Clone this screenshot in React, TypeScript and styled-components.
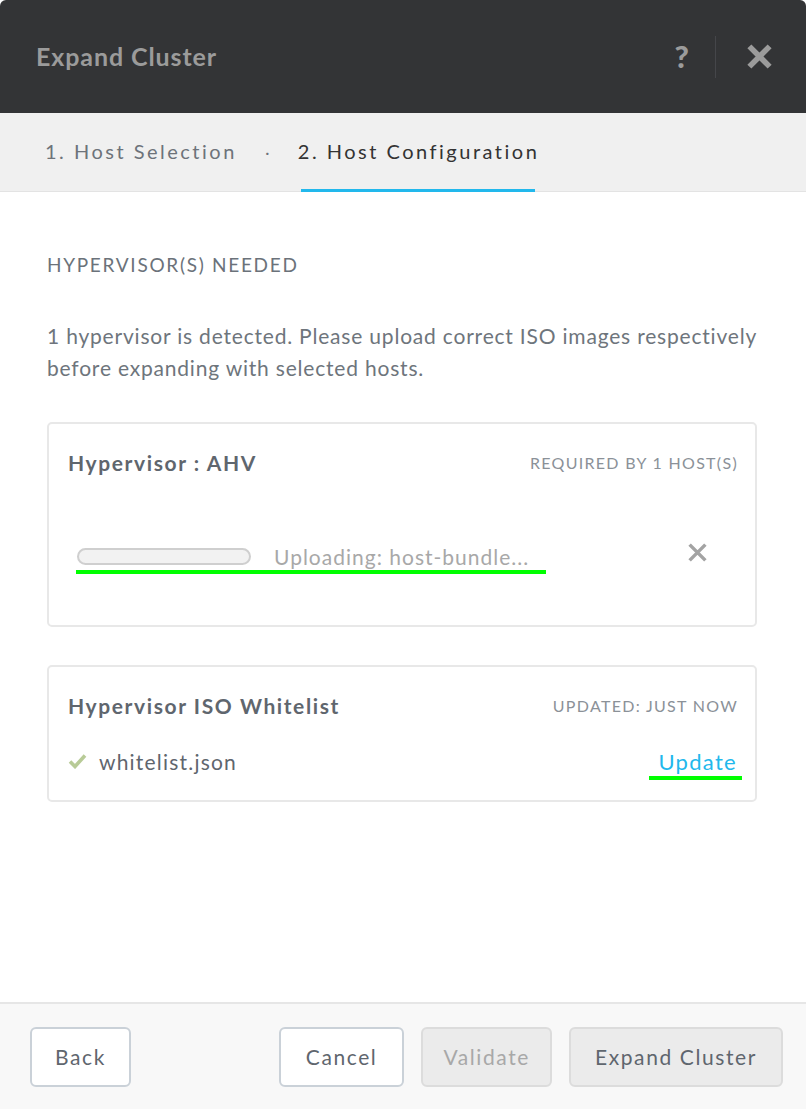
import React from "react";
import styled, { createGlobalStyle } from "styled-components";

const Global = createGlobalStyle`
  html, body { margin: 0; padding: 0; background: #ffffff; }
  body { font-family: Lato, "Open Sans", sans-serif; }
  * { box-sizing: border-box; }
`;

const Dialog = styled.div`
  width: 806px;
  height: 1109px;
  display: flex;
  flex-direction: column;
  background: #ffffff;
  border-radius: 6px 6px 0 0;
  overflow: hidden;
`;

const Header = styled.header`
  height: 113px;
  flex: none;
  background: #333436;
  display: flex;
  align-items: center;
  padding: 0 33px 0 36px;
`;

const Title = styled.h1`
  margin: 0;
  flex: 1;
  font-size: 25px;
  font-weight: 700;
  color: #9b9b9b;
  letter-spacing: 0.9px;
  margin-top: -2px;
`;

const HeaderActions = styled.div`
  display: flex;
  align-items: center;
  height: 42px;
`;

const HelpMark = styled.span`
  font-size: 31px;
  font-weight: 900;
  color: #9b9b9b;
  line-height: 1;
  padding-right: 26px;
`;

const Divider = styled.div`
  width: 1px;
  height: 42px;
  background: #45464a;
  margin-right: 30px;
`;

const Tabs = styled.nav`
  height: 79px;
  flex: none;
  background: #f0f0f0;
  border-bottom: 1px solid #e3e3e3;
  display: flex;
  align-items: stretch;
  padding-left: 45px;
`;

const Tab = styled.div<{ $active?: boolean }>`
  display: flex;
  align-items: center;
  font-size: 20px;
  letter-spacing: 2.5px;
  padding-bottom: 2px;
  color: ${(p) => (p.$active ? "#333333" : "#6d737a")};
  position: relative;
  &::after {
    content: "";
    display: ${(p) => (p.$active ? "block" : "none")};
    position: absolute;
    left: 3px;
    right: 4px;
    bottom: -1px;
    height: 3px;
    background: #22b8ec;
  }
`;

const TabDot = styled.div`
  display: flex;
  align-items: center;
  width: 61px;
  justify-content: center;
  color: #6d737a;
  font-size: 16px;
  padding-bottom: 2px;
`;

const Content = styled.main`
  flex: 1;
  padding: 61px 49px 0 47px;
  display: flex;
  flex-direction: column;
`;

const SectionHeading = styled.h2`
  margin: 0;
  font-size: 19px;
  line-height: 24px;
  font-weight: 400;
  letter-spacing: 1.7px;
  color: #6b727a;
`;

const Paragraph = styled.p`
  margin: 43px 0 38px;
  font-size: 21px;
  line-height: 32px;
  letter-spacing: 0.8px;
  color: #6e757c;
`;

const Card = styled.section<{ $height: number }>`
  height: ${(p) => p.$height}px;
  border: 2px solid #e8e8e8;
  border-radius: 5px;
  padding: 0 18px 0 19px;
  display: flex;
  flex-direction: column;
  margin-bottom: 38px;
`;

const CardHead = styled.div`
  display: flex;
  justify-content: space-between;
  align-items: center;
  height: 42px;
  margin-top: 17px;
`;

const CardTitle = styled.h3`
  margin: 0;
  font-size: 21px;
  font-weight: 700;
  letter-spacing: 1.6px;
  color: #5f666e;
`;

const CardMeta = styled.span`
  font-size: 16px;
  letter-spacing: 1.3px;
  margin-right: -1px;
  color: #8b9198;
  text-transform: uppercase;
`;

const UploadRow = styled.div`
  margin-top: 58px;
  display: flex;
  align-items: center;
  position: relative;
  height: 30px;
  padding-left: 9px;
`;

const Progress = styled.div`
  width: 174px;
  height: 17px;
  border-radius: 9px;
  border: 2px solid #cfcfcf;
  background: #f2f2f2;
  flex: none;
`;

const UploadText = styled.span`
  margin-left: 23px;
  font-size: 21px;
  letter-spacing: 1px;
  color: #a8a8a8;
  flex: 1;
`;

const Highlight = styled.div<{ $left: number; $width: number; $top: number }>`
  position: absolute;
  left: ${(p) => p.$left}px;
  top: ${(p) => p.$top}px;
  width: ${(p) => p.$width}px;
  height: 4px;
  background: #00ff00;
`;

const RemoveBtn = styled.button`
  border: 0;
  background: transparent;
  padding: 0;
  margin-right: 29px;
  margin-top: -8px;
  display: flex;
  cursor: pointer;
`;

const FileRow = styled.div`
  margin-top: 18px;
  display: flex;
  align-items: center;
  height: 34px;
  position: relative;
`;

const FileName = styled.span`
  margin-left: 12px;
  font-size: 21px;
  letter-spacing: 1.2px;
  color: #5f666e;
  flex: 1;
`;

const LinkBtn = styled.a`
  font-size: 22px;
  letter-spacing: 1.3px;
  color: #22b8ec;
  text-decoration: none;
  cursor: pointer;
`;

const Footer = styled.footer`
  height: 107px;
  flex: none;
  background: #f8f8f8;
  border-top: 2px solid #e6e6e6;
  display: flex;
  align-items: center;
  padding: 0 23px 0 30px;
  gap: 17px;
`;

const Spacer = styled.div`
  flex: 1;
`;

const Button = styled.button<{ $variant?: "default" | "disabled" | "muted"; $pad?: number }>`
  height: 60px;
  padding: 0 ${(p) => p.$pad ?? 23}px;
  border-radius: 6px;
  border: 2px solid #cad1d8;
  background: ${(p) => (p.$variant === "disabled" || p.$variant === "muted" ? "#ebebeb" : "#ffffff")};
  color: ${(p) => (p.$variant === "disabled" ? "#a8a8a8" : "#5f666e")};
  border-color: ${(p) => (p.$variant === "disabled" || p.$variant === "muted" ? "#dcdcdc" : "#cad1d8")};
  font-family: Lato, "Open Sans", sans-serif;
  font-size: 21px;
  letter-spacing: 1.6px;
  cursor: pointer;
`;

const Cross = ({ size, stroke, color }: { size: number; stroke: number; color: string }) => (
  <svg width={size} height={size} viewBox="0 0 24 24">
    <path d="M3 3 L21 21 M21 3 L3 21" stroke={color} strokeWidth={stroke} strokeLinecap="butt" />
  </svg>
);

const Check = () => (
  <svg width="19" height="16" viewBox="0 0 19 16">
    <path d="M2 8.5 L7 13.5 L17 2.5" stroke="#b8cb97" strokeWidth="3.6" fill="none" />
  </svg>
);

export default function App() {
  return (
    <>
      <Global />
      <Dialog>
        <Header>
          <Title>Expand Cluster</Title>
          <HeaderActions>
            <HelpMark>?</HelpMark>
            <Divider />
            <Cross size={27} stroke={5} color="#9b9b9b" />
          </HeaderActions>
        </Header>
        <Tabs>
          <Tab>1. Host Selection</Tab>
          <TabDot>·</TabDot>
          <Tab $active>2. Host Configuration</Tab>
        </Tabs>
        <Content>
          <SectionHeading>HYPERVISOR(S) NEEDED</SectionHeading>
          <Paragraph>
            1 hypervisor is detected. Please upload correct ISO images respectively before expanding with selected hosts.
          </Paragraph>
          <Card $height={205}>
            <CardHead>
              <CardTitle>Hypervisor : AHV</CardTitle>
              <CardMeta>Required by 1 host(s)</CardMeta>
            </CardHead>
            <UploadRow>
              <Progress />
              <UploadText>Uploading: host-bundle...</UploadText>
              <RemoveBtn aria-label="Remove">
                <Cross size={21} stroke={4} color="#a3a3a3" />
              </RemoveBtn>
              <Highlight $left={8} $top={29} $width={470} />
            </UploadRow>
          </Card>
          <Card $height={137}>
            <CardHead>
              <CardTitle>Hypervisor ISO Whitelist</CardTitle>
              <CardMeta>Updated: just now</CardMeta>
            </CardHead>
            <FileRow>
              <Check />
              <FileName>whitelist.json</FileName>
              <LinkBtn>Update</LinkBtn>
              <Highlight $left={581} $top={32} $width={93} />
            </FileRow>
          </Card>
        </Content>
        <Footer>
          <Button>Back</Button>
          <Spacer />
          <Button $pad={25}>Cancel</Button>
          <Button $variant="disabled" $pad={20}>Validate</Button>
          <Button $variant="muted" $pad={24}>Expand Cluster</Button>
        </Footer>
      </Dialog>
    </>
  );
}
